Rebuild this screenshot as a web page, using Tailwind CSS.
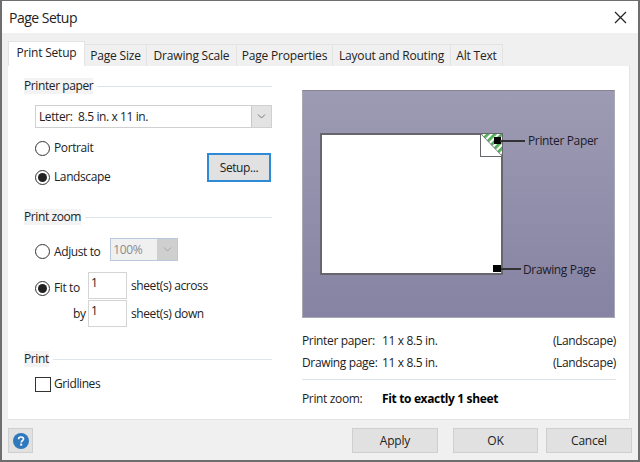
<!DOCTYPE html>
<html lang="en">
<head>
    <meta charset="UTF-8">
    <title>Page Setup</title>
    <script src="https://cdn.jsdelivr.net/npm/@tailwindcss/browser@4"></script>
</head>
<body class="bg-[#f0f0f0]">
<div class="w-[640px] h-[462px] overflow-hidden flex flex-col border-x-2 border-t border-b-2 border-[#6e6e6e] font-['Open_Sans','Noto_Sans',sans-serif] text-[12px] leading-4 text-[#222] tracking-[-0.2px]">

    <!-- Title bar -->
    <div class="h-[32px] shrink-0 bg-white flex items-center justify-between pl-[7px] pr-[11px]">
        <span class="text-[14px] tracking-[-0.5px] pt-px">Page Setup</span>
        <svg width="13" height="13" viewBox="0 0 13 13"><path d="M1 1 L12 12 M12 1 L1 12" stroke="#222" stroke-width="1.2" fill="none"/></svg>
    </div>

    <!-- Tabs -->
    <div class="h-[33px] shrink-0 flex items-end pl-[6px]">
        <div class="w-[77px] h-[25px] bg-white border-x border-t border-[#e3e3e3] flex items-center justify-center pb-[3px]">Print Setup</div>
        <div class="w-[62px] h-[22px] border-r border-t border-[#e3e3e3] flex items-center justify-center">Page Size</div>
        <div class="w-[90px] h-[22px] border-r border-t border-[#e3e3e3] flex items-center justify-center">Drawing Scale</div>
        <div class="w-[96px] h-[22px] border-r border-t border-[#e3e3e3] flex items-center justify-center">Page Properties</div>
        <div class="w-[118px] h-[22px] border-r border-t border-[#e3e3e3] flex items-center justify-center">Layout and Routing</div>
        <div class="w-[52px] h-[22px] border-r border-t border-[#e3e3e3] flex items-center justify-center">Alt Text</div>
    </div>

    <!-- Tab page -->
    <div class="ml-[6px] w-[622px] h-[354px] shrink-0 bg-white border-r border-b border-[#e3e3e3] flex">

        <!-- Left column -->
        <div class="w-[248px] ml-[16px] shrink-0 flex flex-col tracking-[-0.4px]">
            <div class="mt-[12px] h-[16px] flex items-center gap-[4px]">
                <span class="bg-[#f3f3f3] whitespace-nowrap">Printer paper</span>
                <div class="flex-1 h-px bg-[#d9e3ec]"></div>
            </div>

            <div class="mt-[11px] ml-[11px] h-[23px] border border-[#d0d0d0] flex items-center justify-between">
                <span class="pl-[3px] whitespace-pre">Letter:  8.5 in. x 11 in.</span>
                <div class="w-[20px] h-[21px] bg-[#e3e3e3] border-l border-[#c8c8c8] flex items-center justify-center">
                    <svg width="9" height="5" viewBox="0 0 9 5"><path d="M1 0.5 L4.5 4 L8 0.5" stroke="#777" fill="none"/></svg>
                </div>
            </div>

            <div class="ml-[11px] relative h-[54px] mt-[9px]">
                <div class="h-[22px] flex items-center gap-[4px]">
                    <div class="w-[15px] h-[15px] rounded-full border-[1.5px] border-[#333] bg-white"></div>
                    <span>Portrait</span>
                </div>
                <div class="mt-[7px] h-[22px] flex items-center gap-[4px]">
                    <div class="w-[15px] h-[15px] rounded-full border-[1.5px] border-[#333] bg-white flex items-center justify-center">
                        <div class="w-[9px] h-[9px] rounded-full bg-[#222]"></div>
                    </div>
                    <span>Landscape</span>
                </div>
                <div class="absolute left-[172px] top-[16px] w-[64px] h-[29px] bg-[#e1e1e1] border-2 border-[#2f8ad6] flex items-center justify-center">Setup...</div>
            </div>

            <div class="mt-[18px] h-[16px] flex items-center gap-[4px]">
                <span class="bg-[#f3f3f3] whitespace-nowrap">Print zoom</span>
                <div class="flex-1 h-px bg-[#dde6ee]"></div>
            </div>

            <div class="mt-[13px] ml-[11px] h-[23px] flex items-center">
                <div class="w-[15px] h-[15px] rounded-full border-[1.5px] border-[#333] bg-white shrink-0 mt-[4px]"></div>
                <span class="ml-[4px] mt-[4px]">Adjust to</span>
                <div class="ml-[10px] w-[68px] h-[23px] bg-[#f0f0f0] border border-[#b9c8dc] flex items-center justify-between">
                    <span class="pl-[2px] text-[#8b8b8b]">100%</span>
                    <div class="w-[20px] h-[21px] bg-[#cfcfcf] flex items-center justify-center">
                        <svg width="9" height="5" viewBox="0 0 9 5"><path d="M1 0.5 L4.5 4 L8 0.5" stroke="#a5a5a5" fill="none"/></svg>
                    </div>
                </div>
            </div>

            <div class="mt-[11px] ml-[11px] h-[27px] flex items-center">
                <div class="w-[15px] h-[15px] rounded-full border-[1.5px] border-[#333] bg-white shrink-0 flex items-center justify-center mt-[5px]">
                    <div class="w-[9px] h-[9px] rounded-full bg-[#222]"></div>
                </div>
                <span class="ml-[4px] w-[34px] mt-[5px]">Fit to</span>
                <div class="w-[39px] h-[27px] border border-[#d4d4d4] pl-[2px] pt-[2px]">1</div>
                <span class="ml-[4px]">sheet(s) across</span>
            </div>

            <div class="mt-px ml-[49px] h-[27px] flex items-center">
                <span class="w-[15px] mt-[1px]">by</span>
                <div class="w-[39px] h-[27px] border border-[#d4d4d4] pl-[2px] pt-[2px]">1</div>
                <span class="ml-[4px]">sheet(s) down</span>
            </div>

            <div class="mt-[24px] h-[16px] flex items-center gap-[4px]">
                <span class="bg-[#f3f3f3] whitespace-nowrap">Print</span>
                <div class="flex-1 h-px bg-[#dde6ee]"></div>
            </div>

            <div class="mt-[9px] ml-[11px] h-[16px] flex items-center gap-[3px]">
                <div class="w-[16px] h-[15px] border-[1.5px] border-[#333] bg-white"></div>
                <span>Gridlines</span>
            </div>
        </div>

        <!-- Right column -->
        <div class="w-[314px] ml-[30px] shrink-0 flex flex-col tracking-[-0.35px]">
            <div class="mt-[24px] mr-px h-[228px] relative border border-[#a9a9b5] border-t-[#85838f] bg-[linear-gradient(180deg,#9d9bb3,#8683a3)]">
                <!-- drawing page -->
                <div class="absolute left-[17px] top-[42px] w-[183px] h-[142px] bg-white border-2 border-[#66666c]"></div>
                <svg class="absolute left-[177px] top-[42px]" width="23" height="24" viewBox="0 0 23 24">
                    <defs>
                        <pattern id="hatch" width="5" height="5" patternUnits="userSpaceOnUse" patternTransform="rotate(-45)">
                            <rect width="5" height="2.8" fill="#4fae58"/>
                        </pattern>
                    </defs>
                    <rect x="0.5" y="0.5" width="22" height="23" fill="#fff" stroke="#66666c"/>
                    <polygon points="1,1 22,1 22,23" fill="url(#hatch)"/>
                    <path d="M0.5 0.5 L22.5 23.5" stroke="#66666c" stroke-width="0.8"/>
                </svg>
                <div class="absolute left-[191px] top-[46px] w-[7px] h-[7px] bg-black"></div>
                <div class="absolute left-[197px] top-[49px] w-[25px] h-[2px] bg-[#333]"></div>
                <span class="absolute left-[225px] top-[42px] text-[#1c1c2a]">Printer Paper</span>
                <div class="absolute left-[190px] top-[174px] w-[8px] h-[7px] bg-black"></div>
                <div class="absolute left-[198px] top-[177px] w-[20px] h-[2px] bg-[#333]"></div>
                <span class="absolute left-[220px] top-[171px] text-[#1c1c2a]">Drawing Page</span>
            </div>

            <div class="mt-[15px] flex h-[16px]">
                <span class="w-[80px]">Printer paper:</span>
                <span class="flex-1">11 x 8.5 in.</span>
                <span>(Landscape)</span>
            </div>
            <div class="mt-[6px] flex h-[16px]">
                <span class="w-[80px] whitespace-nowrap">Drawing page:</span>
                <span class="flex-1">11 x 8.5 in.</span>
                <span>(Landscape)</span>
            </div>
            <div class="mt-[8px] h-px bg-[#dbe3ea]"></div>
            <div class="mt-[11px] flex h-[16px]">
                <span class="w-[80px]">Print zoom:</span>
                <span class="font-bold text-black">Fit to exactly 1 sheet</span>
            </div>
        </div>
    </div>

    <!-- Footer buttons -->
    <div class="mt-[8px] pl-[6px] flex">
        <div class="w-[25px] h-[25px] bg-[#e1e1e1] border border-[#cfcfcf] flex items-center justify-center">
            <svg width="16" height="16" viewBox="0 0 16 16">
                <circle cx="8" cy="8" r="8" fill="#2f78bd"/>
                <path d="M5.6 6.2 C5.6 4.8 6.7 4 8 4 C9.4 4 10.5 4.8 10.5 6.1 C10.5 7.6 8.2 7.8 8.2 9.6" stroke="#fff" stroke-width="1.7" fill="none"/>
                <rect x="7.2" y="10.6" width="2" height="2" fill="#fff"/>
            </svg>
        </div>
        <div class="ml-[319px] w-[86px] h-[25px] bg-[#e1e1e1] border border-[#cfcfcf] flex items-center justify-center">Apply</div>
        <div class="ml-[15px] w-[85px] h-[25px] bg-[#e1e1e1] border border-[#cfcfcf] flex items-center justify-center">OK</div>
        <div class="ml-[8px] w-[86px] h-[25px] bg-[#e1e1e1] border border-[#cfcfcf] flex items-center justify-center">Cancel</div>
    </div>
</div>
</body>
</html>
